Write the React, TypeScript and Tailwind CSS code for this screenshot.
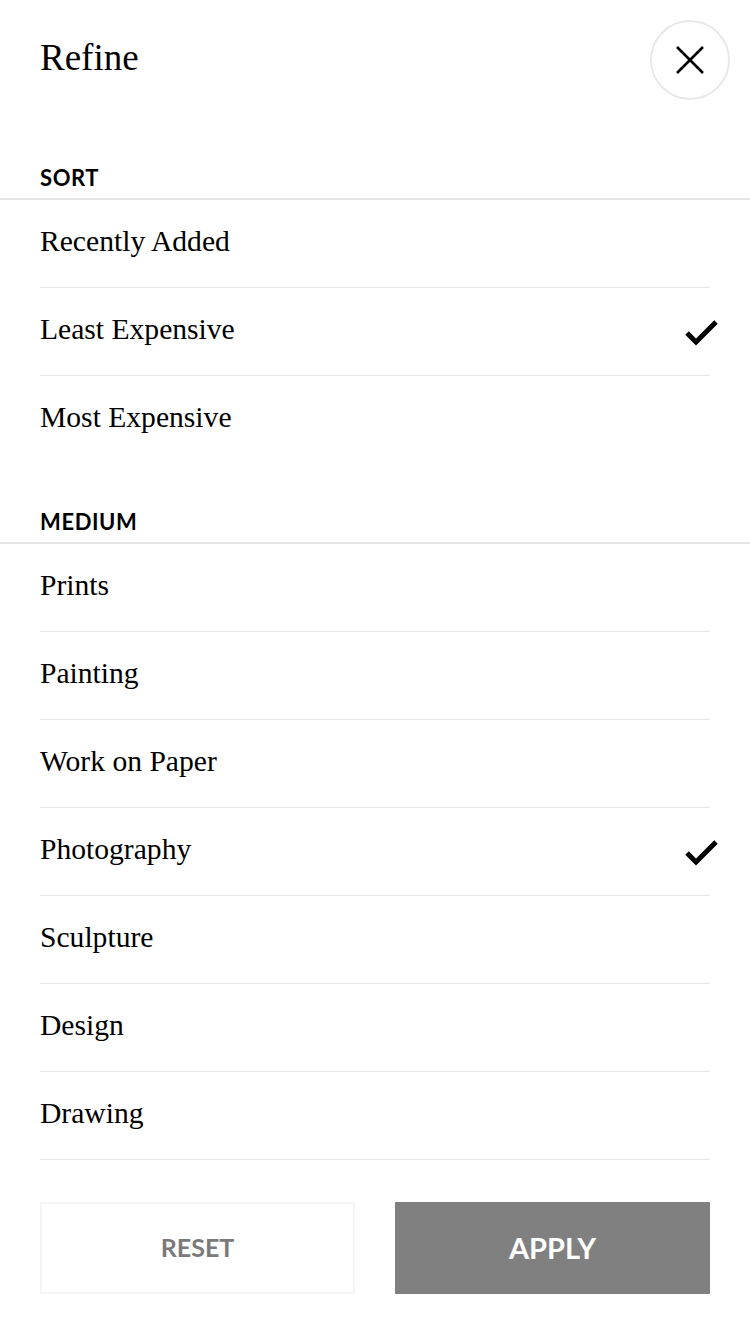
import React from "react";

const serif = { fontFamily: '"Liberation Serif", "Times New Roman", serif' };

function Check() {
  return (
    <svg width="36" height="28" viewBox="0 0 36 28" className="mr-[-10px]">
      <path d="M3 15 L12 24 L32 4" fill="none" stroke="#000" strokeWidth="5" strokeLinecap="butt" strokeLinejoin="miter" />
    </svg>
  );
}

function Row({ label, checked, last }: { label: string; checked?: boolean; last?: boolean }) {
  return (
    <li
      className={`h-[88px] flex items-center justify-between text-[29.6px] text-black ${last ? "" : "border-b border-[#e6e6e6]"}`}
      style={serif}
    >
      <span className="leading-none mb-[4px]">{label}</span>
      {checked ? <Check /> : null}
    </li>
  );
}

function Heading({ children, top }: { children: React.ReactNode; top: string }) {
  return (
    <div className={`${top} pb-[8px] pl-10 border-b-2 border-[#e6e6e6]`}>
      <div className="text-[22px] leading-[24px] font-bold tracking-[0.6px] text-black font-['Lato',sans-serif]">
        {children}
      </div>
    </div>
  );
}

export default function App() {
  return (
    <div className="w-[750px] h-[1334px] bg-white overflow-hidden">
      <div className="h-[100px] pt-5 pl-10 pr-5 flex justify-between items-center">
        <h1 className="text-[37px] leading-none text-black mb-[-14px] self-start mt-[19px]" style={serif}>
          Refine
        </h1>
        <button className="w-20 h-20 rounded-full border-2 border-[#e8e8e8] flex items-center justify-center bg-white">
          <svg width="30" height="30" viewBox="0 0 30 30">
            <path d="M2 2 L28 28 M28 2 L2 28" stroke="#000" strokeWidth="2.6" fill="none" />
          </svg>
        </button>
      </div>

      <Heading top="pt-[66px]">SORT</Heading>
      <ul className="px-10">
        <Row label="Recently Added" />
        <Row label="Least Expensive" checked />
        <Row label="Most Expensive" last />
      </ul>

      <Heading top="pt-[46px]">MEDIUM</Heading>
      <ul className="px-10">
        <Row label="Prints" />
        <Row label="Painting" />
        <Row label="Work on Paper" />
        <Row label="Photography" checked />
        <Row label="Sculpture" />
        <Row label="Design" />
        <Row label="Drawing" />
      </ul>

      <div className="px-10 mt-[42px] grid grid-cols-2 gap-10">
        <button className="h-[92px] border-2 border-[#f5f5f5] bg-white flex items-center justify-center text-[25px] font-bold text-[#7a7a7a] font-['Lato',sans-serif]">
          RESET
        </button>
        <button className="h-[92px] bg-[#808080] flex items-center justify-center text-[29px] font-bold text-white font-['Lato',sans-serif]">
          APPLY
        </button>
      </div>
    </div>
  );
}
